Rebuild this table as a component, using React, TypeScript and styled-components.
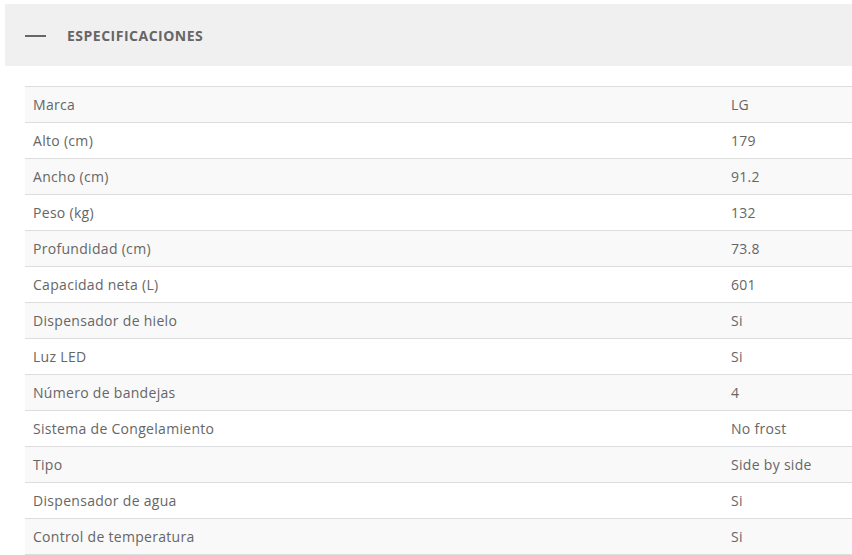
import React from "react";
import styled, { createGlobalStyle } from "styled-components";

const GlobalStyle = createGlobalStyle`
  html, body {
    margin: 0;
    padding: 0;
    background: #fff;
  }
  body {
    font-family: "Open Sans", "Liberation Sans", sans-serif;
    overflow: hidden;
  }
`;

const Section = styled.section`
  padding: 4px 0 0 5px;
`;

const Header = styled.div`
  display: flex;
  align-items: center;
  height: 62px;
  padding-left: 20px;
  background: #f0f0f0;
`;

const Dash = styled.span`
  display: block;
  width: 21px;
  height: 2px;
  margin-top: 1px;
  background: #666;
  margin-right: 21px;
`;

const Title = styled.h2`
  margin: 0;
  font-size: 14px;
  font-weight: 700;
  color: #666;
  letter-spacing: 0.5px;
`;

const Body = styled.div`
  padding: 20px 0 0 20px;
`;

const Table = styled.table`
  width: 827px;
  border-collapse: collapse;
  border-bottom: 1px solid #ddd;
`;

const Row = styled.tr<{ $odd: boolean }>`
  background: ${(p) => (p.$odd ? "#f9f9f9" : "#fff")};
  border-top: 1px solid #ddd;
`;

const Cell = styled.td<{ $value?: boolean }>`
  height: 35px;
  padding: 0 8px;
  font-size: 14px;
  font-weight: 400;
  letter-spacing: 0.3px;
  color: #666;
  width: ${(p) => (p.$value ? "113px" : "auto")};
  vertical-align: middle;
`;

const specs: [string, string][] = [
  ["Marca", "LG"],
  ["Alto (cm)", "179"],
  ["Ancho (cm)", "91.2"],
  ["Peso (kg)", "132"],
  ["Profundidad (cm)", "73.8"],
  ["Capacidad neta (L)", "601"],
  ["Dispensador de hielo", "Si"],
  ["Luz LED", "Si"],
  ["Número de bandejas", "4"],
  ["Sistema de Congelamiento", "No frost"],
  ["Tipo", "Side by side"],
  ["Dispensador de agua", "Si"],
  ["Control de temperatura", "Si"],
];

const App = () => (
  <>
    <GlobalStyle />
    <Section>
      <Header>
        <Dash />
        <Title>ESPECIFICACIONES</Title>
      </Header>
      <Body>
        <Table>
          <tbody>
            {specs.map(([label, value], i) => (
              <Row key={label} $odd={i % 2 === 0}>
                <Cell>{label}</Cell>
                <Cell $value>{value}</Cell>
              </Row>
            ))}
          </tbody>
        </Table>
      </Body>
    </Section>
  </>
);

export default App;
